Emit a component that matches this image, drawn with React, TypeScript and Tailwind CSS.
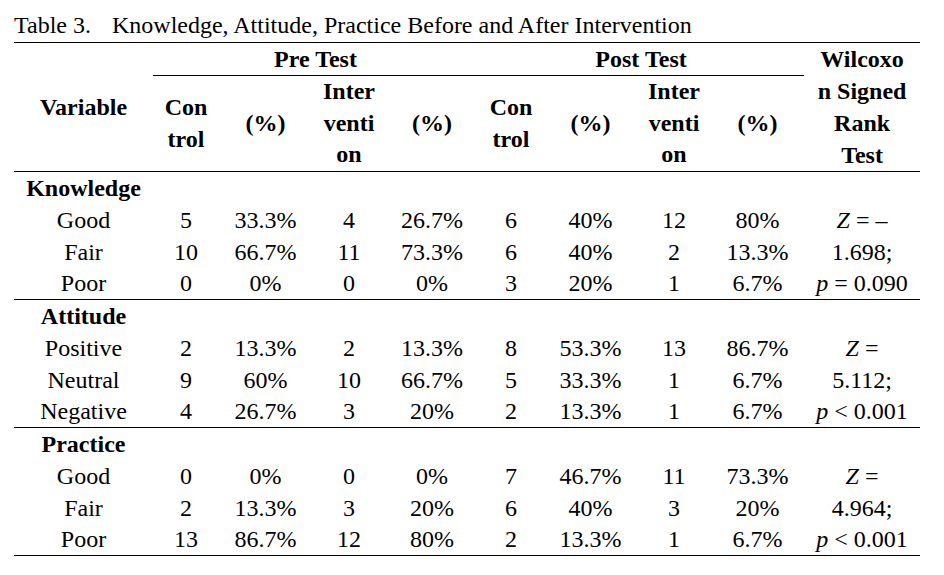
import type { ReactNode } from "react";

type Row = {
  label: string;
  cells: string[];
  test: ReactNode;
};

type Section = {
  title: string;
  rows: Row[];
};

const sections: Section[] = [
  {
    title: "Knowledge",
    rows: [
      { label: "Good", cells: ["5", "33.3%", "4", "26.7%", "6", "40%", "12", "80%"], test: <><i>Z</i> = –</> },
      { label: "Fair", cells: ["10", "66.7%", "11", "73.3%", "6", "40%", "2", "13.3%"], test: "1.698;" },
      { label: "Poor", cells: ["0", "0%", "0", "0%", "3", "20%", "1", "6.7%"], test: <><i>p</i> = 0.090</> },
    ],
  },
  {
    title: "Attitude",
    rows: [
      { label: "Positive", cells: ["2", "13.3%", "2", "13.3%", "8", "53.3%", "13", "86.7%"], test: <><i>Z</i> =</> },
      { label: "Neutral", cells: ["9", "60%", "10", "66.7%", "5", "33.3%", "1", "6.7%"], test: "5.112;" },
      { label: "Negative", cells: ["4", "26.7%", "3", "20%", "2", "13.3%", "1", "6.7%"], test: <><i>p</i> &lt; 0.001</> },
    ],
  },
  {
    title: "Practice",
    rows: [
      { label: "Good", cells: ["0", "0%", "0", "0%", "7", "46.7%", "11", "73.3%"], test: <><i>Z</i> =</> },
      { label: "Fair", cells: ["2", "13.3%", "3", "20%", "6", "40%", "3", "20%"], test: "4.964;" },
      { label: "Poor", cells: ["13", "86.7%", "12", "80%", "2", "13.3%", "1", "6.7%"], test: <><i>p</i> &lt; 0.001</> },
    ],
  },
];

const colWidths = ["w-[139px]", "w-[66px]", "w-[93px]", "w-[74px]", "w-[92px]", "w-[66px]", "w-[93px]", "w-[74px]", "w-[93px]", "w-[116px]"];

function SectionRows({ section }: { section: Section }) {
  const last = section.rows.length - 1;
  return (
    <>
      <tr>
        <td className="h-[32px] p-0 font-bold">{section.title}</td>
        <td colSpan={9} className="p-0" />
      </tr>
      {section.rows.map((row, i) => {
        const edge = i === last ? "border-b border-black h-[32px] leading-[31px]" : "h-[32px]";
        return (
          <tr key={row.label}>
            <td className={`p-0 ${edge}`}>{row.label}</td>
            {row.cells.map((c, j) => (
              <td key={j} className={`p-0 ${edge}`}>
                {c}
              </td>
            ))}
            <td className={`p-0 ${edge}`}>{row.test}</td>
          </tr>
        );
      })}
    </>
  );
}

export default function App() {
  return (
    <div className="h-[575px] w-[944px] bg-white pt-[11px] font-['Liberation_Serif',serif] text-black">
      <p className="mb-[3px] pl-[14px] text-[24px] leading-[28px]">
        Table 3.<span className="ml-[21px]">Knowledge, Attitude, Practice Before and After Intervention</span>
      </p>
      <table className="ml-[14px] w-[906px] table-fixed border-separate border-spacing-0 border-t border-black text-center text-[24px] leading-[32px]">
        <colgroup>
          {colWidths.map((w, i) => (
            <col key={i} className={w} />
          ))}
        </colgroup>
        <thead className="font-bold">
          <tr>
            <th rowSpan={2} className="border-b border-black p-0">
              Variable
            </th>
            <th colSpan={4} className="h-[33px] border-b border-black p-0">
              Pre Test
            </th>
            <th colSpan={4} className="h-[33px] border-b border-black p-0">
              Post Test
            </th>
            <th rowSpan={2} className="border-b border-black p-0">
              Wilcoxo
              <br />n Signed
              <br />
              Rank
              <br />
              Test
            </th>
          </tr>
          <tr className="leading-[31.67px]">
            {["Pre", "Post"].map((k) => (
              <>
                <th key={k + "c"} className="border-b border-black p-0">
                  Con
                  <br />
                  trol
                </th>
                <th key={k + "p1"} className="border-b border-black p-0">
                  (%)
                </th>
                <th key={k + "i"} className="border-b border-black p-0">
                  Inter
                  <br />
                  venti
                  <br />
                  on
                </th>
                <th key={k + "p2"} className="border-b border-black p-0">
                  (%)
                </th>
              </>
            ))}
          </tr>
        </thead>
        <tbody>
          {sections.map((s) => (
            <SectionRows key={s.title} section={s} />
          ))}
        </tbody>
      </table>
    </div>
  );
}
